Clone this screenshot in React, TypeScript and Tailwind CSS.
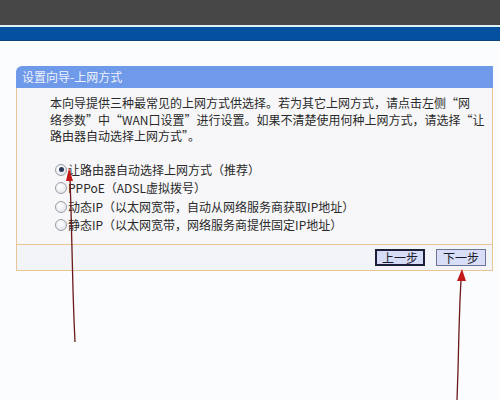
import React from 'react';

const font = { fontFamily: '"Noto Sans CJK SC", "Liberation Sans", sans-serif' };

function Radio({ checked }: { checked?: boolean }) {
  return (
    <span className="relative inline-flex w-[12px] h-[12px] rounded-full border border-[#9a9ea8] bg-[radial-gradient(circle_at_40%_35%,#ffffff,#dcdfe6)] items-center justify-center shrink-0">
      {checked && <span className="w-[5px] h-[5px] rounded-full bg-[#2a3a5a]" />}
    </span>
  );
}

const options = [
  { label: '让路由器自动选择上网方式（推荐）', checked: true },
  { label: 'PPPoE（ADSL虚拟拨号）' },
  { label: '动态IP（以太网宽带，自动从网络服务商获取IP地址）' },
  { label: '静态IP（以太网宽带，网络服务商提供固定IP地址）' },
];

export default function App() {
  return (
    <div className="relative w-[500px] h-[400px] bg-[#fbfcfd] overflow-hidden text-[12px] text-[#2a2a2a]" style={font}>
      <div className="h-[25px] bg-[#474747]" />
      <div className="h-[2px] bg-[#dff0f8]" />
      <div className="h-[14px] bg-[#0650a0] border-b border-[#0a4478]" />

      <div className="mt-[25px] ml-[16px] w-[477px]">
        <div className="h-[22px] rounded-tl-[6px] bg-[#6f99e9] flex items-center pl-[6px] text-[#eef2fb]">
          设置向导-上网方式
        </div>
        <div className="border-x border-b border-[#e7c597] bg-[#f7f7f9]">
          <div className="h-[156px] pl-[33px] pt-[7px] leading-[16.5px]">
            <p>本向导提供三种最常见的上网方式供选择。若为其它上网方式，请点击左侧“网</p>
            <p>络参数”中“WAN口设置”进行设置。如果不清楚使用何种上网方式，请选择“让</p>
            <p>路由器自动选择上网方式”。</p>
            <div className="mt-[16px] flex flex-col">
              {options.map((o) => (
                <label key={o.label} className="flex items-center h-[18.5px] pl-[5px] gap-[1px]">
                  <Radio checked={o.checked} />
                  <span>{o.label}</span>
                </label>
              ))}
            </div>
          </div>
          <div className="h-[26px] border-t border-[#e7c597] bg-[#f3f4f8] flex items-center justify-end gap-[11px] pr-[6px]">
            <button className="w-[50px] h-[17px] border-2 border-[#1c1f3a] bg-[#d6dbf6] text-[12px] leading-none text-[#1a1a2a] flex items-center justify-center">
              上一步
            </button>
            <button className="w-[50px] h-[17px] border border-[#6c7394] bg-[#d8def7] text-[12px] leading-none text-[#1a1a2a] flex items-center justify-center">
              下一步
            </button>
          </div>
        </div>
      </div>

      <svg className="absolute inset-0 pointer-events-none" width="500" height="400">
        <polyline points="75,342 74,320 73,290 72,250 71,210 70,178" fill="none" stroke="#6a1a1a" strokeWidth="1.3" />
        <polygon points="66,181 69,168 73,181" fill="#c41818" />
        <polyline points="457,400 458,370 459,330 460,300 461,280" fill="none" stroke="#6a1a1a" strokeWidth="1.3" />
        <polygon points="457,281 462,269 466,281" fill="#c41818" />
      </svg>
    </div>
  );
}
